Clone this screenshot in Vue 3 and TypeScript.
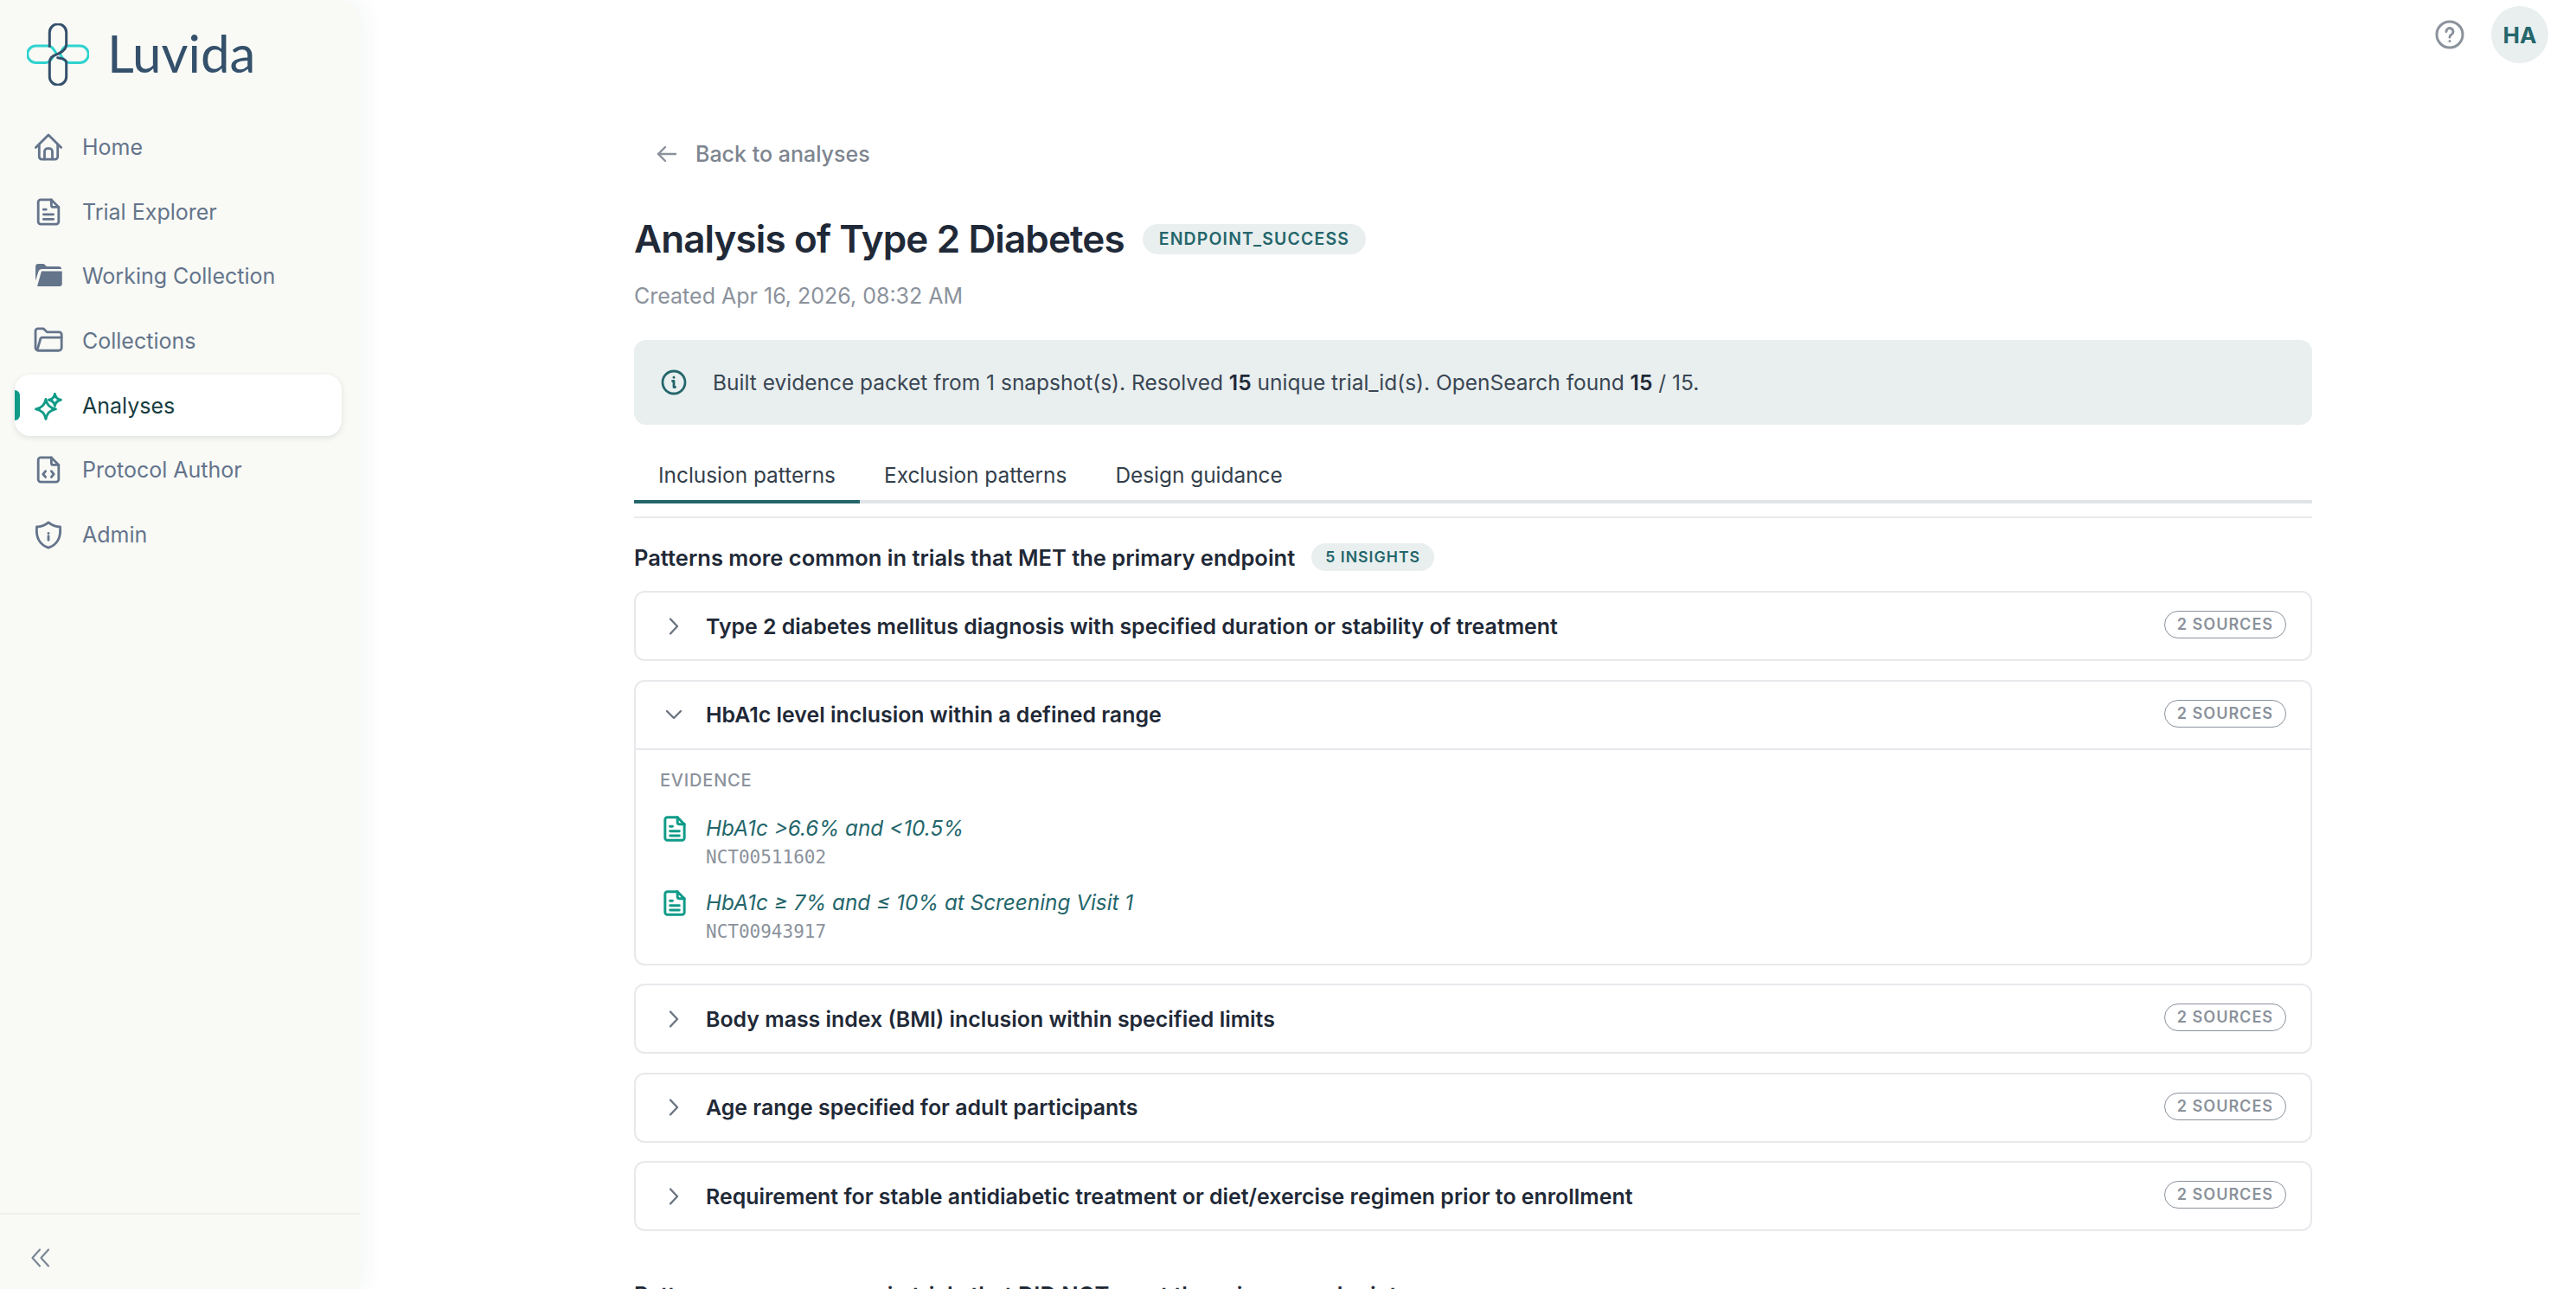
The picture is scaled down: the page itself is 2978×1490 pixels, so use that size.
<script setup lang="ts">
type NavItem = {
  label: string
  paths: string[]
  solid?: string[]
  active?: boolean
}

type Insight = {
  title: string
  open?: boolean
}

const filePaths = [
  'M19 3.5H8A2.5 2.5 0 0 0 5.500 6v20A2.500 2.500 0 0 0 8 28.500h16a2.500 2.500 0 0 0 2.500-2.500V11z',
  'M19 3.500V9a2 2 0 0 0 2 2h5.500',
]

const navItems: NavItem[] = [
  {
    label: 'Home',
    paths: [
      'M3 16.500 16 3.500l13 13',
      'M6.500 13.500V26A2.500 2.500 0 0 0 9 28.500h14a2.500 2.500 0 0 0 2.500-2.500V13.500',
      'M12 28.500v-8a3 3 0 0 1 3-3h2a3 3 0 0 1 3 3v8',
    ],
  },
  {
    label: 'Trial Explorer',
    paths: [...filePaths, 'M11 13.500h2.500', 'M11 18.500h10', 'M11 23.500h10'],
  },
  {
    label: 'Working Collection',
    paths: [],
    solid: [
      'M2.700 6.500a3 3 0 0 1 3-3h5.500l3 2.700h12.300a3 3 0 0 1 3 2.600H9.500a4 4 0 0 0-3.800 2.700L2.700 21z',
      'M4.500 26.700 8.500 12.300a2 2 0 0 1 2-1.300H30v13a2.700 2.700 0 0 1-2.700 2.700z',
    ],
  },
  {
    label: 'Collections',
    paths: [
      'M4.500 25.500 7.800 14a2 2 0 0 1 2-1.500H29.500',
      'M29.500 12.500V23a3 3 0 0 1-3 3H5.700a3 3 0 0 1-3-3V6a2.500 2.500 0 0 1 2.500-2.500h5.800l3.500 3.500h12.500a2.500 2.500 0 0 1 2.500 2.500z',
    ],
  },
  {
    label: 'Analyses',
    active: true,
    paths: [
      'M13.300 9.300Q15 18 23.500 19.500 15 21 13.300 29.700 11.600 21 3.100 19.500 11.600 18 13.300 9.300z',
      'M22.600 3.800Q23.500 9.100 28.800 10 23.500 10.900 22.600 16.200 21.700 10.900 16.400 10 21.700 9.100 22.600 3.800z',
    ],
  },
  {
    label: 'Protocol Author',
    paths: [...filePaths, 'M13 17.500l-2.500 3 2.500 3', 'M19 17.500l2.500 3-2.500 3'],
  },
  {
    label: 'Admin',
    paths: [
      'M16 3.500c3.500 3 7.500 4.500 12 4.500.8 8.500-.5 17.500-12 21.500C4.500 25.500 3.200 16.500 4 8c4.500 0 8.500-1.500 12-4.500z',
      'M16 17.500v4',
      'M16 14.500v.1',
    ],
  },
]

const insights: Insight[] = [
  { title: 'Type 2 diabetes mellitus diagnosis with specified duration or stability of treatment' },
  { title: 'HbA1c level inclusion within a defined range', open: true },
  { title: 'Body mass index (BMI) inclusion within specified limits' },
  { title: 'Age range specified for adult participants' },
  { title: 'Requirement for stable antidiabetic treatment or diet/exercise regimen prior to enrollment' },
]

const evidence = [
  { quote: 'HbA1c >6.6% and <10.5%', trial: 'NCT00511602' },
  { quote: 'HbA1c ≥ 7% and ≤ 10% at Screening Visit 1', trial: 'NCT00943917' },
]

const tabs = ['Inclusion patterns', 'Exclusion patterns', 'Design guidance']
</script>

<template>
  <div class="shell">
    <aside class="sidebar">
      <div class="brand">
        <svg class="logo" viewBox="0 0 72 72" fill="none" stroke-width="3" stroke-linecap="round">
          <path d="M34 34.700C31 30 29 26 25 26H10.500a9.750 9.750 0 0 0 0 19.500H22c4 0 6-3 8.700-7.500" stroke="#2fd3cf" />
          <path d="M38.500 35.500C41 30 43 26 47 26h14.500a9.750 9.750 0 0 1 0 19.500H49c-4 0-7-4-10-9" stroke="#2fd3cf" />
          <path d="M26.300 26.500V10.500a9.700 9.700 0 0 1 19.400 0V24c0 5-3 8-8.400 10.700-6 3-11 3.500-11 10.300v16.500a9.700 9.700 0 0 0 19.400 0V45c0-3-4-4.500-10-5.300" stroke="#34506b" />
        </svg>
        <span class="brand-name">Luvida</span>
      </div>

      <nav class="nav">
        <a v-for="item in navItems" :key="item.label" :class="['nav-item', { active: item.active }]">
          <svg class="nav-icon" viewBox="0 0 32 32" fill="none" stroke="currentColor" stroke-width="2.500" stroke-linecap="round" stroke-linejoin="round">
            <path v-for="d in item.solid" :key="d" :d="d" fill="currentColor" stroke="none" />
            <path v-for="d in item.paths" :key="d" :d="d" />
          </svg>
          {{ item.label }}
        </a>
      </nav>

      <div class="collapse">
        <svg width="26" height="26" viewBox="0 0 26 26" fill="none" stroke="#7b8794" stroke-width="2.200" stroke-linecap="round" stroke-linejoin="round">
          <path d="M12 3.500 3.500 13l8.500 9.500" />
          <path d="M22 3.500 13.500 13l8.500 9.500" />
        </svg>
      </div>
    </aside>

    <main class="main">
      <header class="topbar">
        <svg class="help" viewBox="0 0 34 34" fill="none" stroke="#8b929c" stroke-width="3" stroke-linecap="round" stroke-linejoin="round">
          <circle cx="17" cy="17" r="15" />
          <path d="M13 13.500a4 4 0 1 1 6 3.500c-1.500.8-2 1.500-2 3" />
          <path d="M17 24.500v.1" />
        </svg>
        <div class="avatar">HA</div>
      </header>

      <div class="content">
        <a class="back">
          <svg width="26" height="26" viewBox="0 0 26 26" fill="none" stroke="#8b929c" stroke-width="2.400" stroke-linecap="round" stroke-linejoin="round">
            <path d="M23 13H3" />
            <path d="M11 5l-8 8 8 8" />
          </svg>
          Back to analyses
        </a>

        <div class="title-row">
          <h1>Analysis of Type 2 Diabetes</h1>
          <span class="type-badge">ENDPOINT_SUCCESS</span>
        </div>
        <p class="created">Created Apr 16, 2026, 08:32 AM</p>

        <div class="alert">
          <svg class="alert-icon" viewBox="0 0 30 30" fill="none" stroke="#24666b" stroke-width="2.800" stroke-linecap="round" stroke-linejoin="round">
            <circle cx="15" cy="15" r="13" />
            <path d="M13.500 13.500H15v7h1.500" />
            <path d="M15 9.200v.1" />
          </svg>
          <span>Built evidence packet from 1 snapshot(s). Resolved <b>15</b> unique trial_id(s). OpenSearch found <b>15</b> / 15.</span>
        </div>

        <div class="tabs">
          <button v-for="(tab, index) in tabs" :key="tab" :class="['tab', { selected: index === 0 }]">{{ tab }}</button>
        </div>
        <div class="tabs-rule"></div>

        <div class="section-head">
          <h2>Patterns more common in trials that MET the primary endpoint</h2>
          <span class="count-badge">5 INSIGHTS</span>
        </div>

        <section v-for="insight in insights" :key="insight.title" class="card">
          <div :class="['card-head', { open: insight.open }]">
            <svg class="chevron" viewBox="0 0 24 24" fill="none" stroke="#6c7480" stroke-width="2.400" stroke-linecap="round" stroke-linejoin="round">
              <path :d="insight.open ? 'M4 8l8 8 8-8' : 'M8 3.500l8 8.500-8 8.500'" />
            </svg>
            <span class="card-title">{{ insight.title }}</span>
            <span class="sources">2 SOURCES</span>
          </div>
          <div v-if="insight.open" class="card-body">
            <div class="evidence-label">EVIDENCE</div>
            <div v-for="row in evidence" :key="row.trial" class="evidence-row">
              <svg class="doc" viewBox="0 0 32 32" fill="none" stroke="#0f9b88" stroke-width="2.800" stroke-linecap="round" stroke-linejoin="round">
                <path v-for="d in filePaths" :key="d" :d="d" />
                <path d="M11 13.500h2.500" />
                <path d="M11 18.500h10" />
                <path d="M11 23.500h10" />
              </svg>
              <div>
                <div class="quote">{{ row.quote }}</div>
                <div class="trial">{{ row.trial }}</div>
              </div>
            </div>
          </div>
        </section>

        <h2 class="next-head">Patterns more common in trials that DID NOT meet the primary endpoint</h2>
      </div>
    </main>
  </div>
</template>

<style>
html,
body {
  margin: 0;
  overflow: hidden;
  background: #fff;
}
</style>

<style scoped>
.shell {
  display: flex;
  height: 100vh;
  overflow: hidden;
  font-family: Inter, 'Liberation Sans', sans-serif;
}

.sidebar {
  position: relative;
  z-index: 2;
  display: flex;
  flex-direction: column;
  flex: 0 0 416px;
  box-sizing: border-box;
  background: #f9faf6;
  border-top-right-radius: 24px;
  box-shadow: 6px 0 24px rgba(30, 50, 60, 0.05);
}

.brand {
  display: flex;
  align-items: center;
  gap: 21px;
  height: 71px;
  padding: 27px 0 0 31px;
}

.logo {
  width: 72px;
  height: 72px;
}

.brand-name {
  margin-top: -3px;
  font-family: Lato, sans-serif;
  font-size: 60px;
  color: #34506b;
}

.nav {
  display: flex;
  flex-direction: column;
  gap: 3.700px;
  margin: 36.500px 0 0 17px;
  width: 378px;
}

.nav-item {
  position: relative;
  display: flex;
  align-items: center;
  gap: 21px;
  height: 71px;
  padding-left: 21px;
  border-radius: 18px;
  font-size: 25px;
  color: #64748b;
}

.nav-item.active {
  background: #fff;
  color: #173c40;
  box-shadow: 0 2px 6px rgba(20, 40, 50, 0.12);
}

.nav-item.active::before {
  content: '';
  position: absolute;
  left: 0;
  top: 18px;
  width: 6px;
  height: 35px;
  border-radius: 0 6px 6px 0;
  background: #0f9b88;
}

.nav-item.active .nav-icon {
  color: #0f9b88;
}

.nav-icon {
  width: 36px;
  height: 36px;
  flex: none;
}

.collapse {
  margin-top: auto;
  height: 86px;
  display: flex;
  align-items: center;
  padding: 0 0 0 34px;
  border-top: 2px solid #efefec;
}

.collapse svg {
  margin-top: 14px;
}

.main {
  position: relative;
  flex: 1;
  min-width: 0;
}

.topbar {
  position: absolute;
  top: 7px;
  right: 32px;
  display: flex;
  align-items: center;
  gap: 31px;
}

.help {
  width: 34px;
  height: 34px;
}

.avatar {
  width: 66px;
  height: 66px;
  border-radius: 50%;
  background: #e9efef;
  color: #24666b;
  font-size: 26px;
  font-weight: 700;
  display: flex;
  align-items: center;
  justify-content: center;
}

.content {
  box-sizing: border-box;
  width: 1940px;
  margin-left: 317px;
  padding-top: 160px;
}

.back {
  display: flex;
  align-items: center;
  gap: 20px;
  height: 36px;
  padding-left: 25px;
  font-size: 25px;
  font-weight: 500;
  color: #7d858f;
}

.title-row {
  display: flex;
  align-items: center;
  gap: 21px;
  margin-top: 48px;
  height: 64px;
}

h1 {
  margin: 0;
  font-size: 44px;
  font-weight: 600;
  letter-spacing: -0.880px;
  color: #1f2937;
}

.type-badge {
  padding: 0 19px;
  line-height: 35px;
  border-radius: 18px;
  background: #e9efef;
  color: #24666b;
  font-size: 19.400px;
  font-weight: 600;
  letter-spacing: 1.200px;
}

.created {
  margin: 18px 0 0;
  line-height: 32px;
  font-size: 25px;
  color: #8b929c;
}

.alert {
  display: flex;
  align-items: center;
  gap: 30px;
  height: 98px;
  margin-top: 35px;
  padding-left: 31px;
  border-radius: 14px;
  background: #e9efef;
  font-size: 24.500px;
  color: #3a4653;
}

.alert b {
  font-weight: 600;
  color: #1f2937;
}

.alert-icon {
  width: 30px;
  height: 30px;
}

.tabs {
  display: flex;
  margin-top: 37px;
  border-bottom: 4px solid #dfe4e6;
  height: 50px;
}

.tab {
  height: 54px;
  padding: 0 28px 9px;
  border: 0;
  border-bottom: 4px solid transparent;
  background: none;
  font: inherit;
  font-size: 24.400px;
  color: #343f4c;
}

.tab.selected {
  border-bottom-color: #24666b;
}

.tabs-rule {
  height: 2px;
  margin-top: 15px;
  background: #e8e9ec;
}

.section-head {
  display: flex;
  align-items: center;
  gap: 19px;
  height: 32px;
  margin: 29px 0 23px;
}

h2 {
  margin: 0;
  font-size: 25.500px;
  font-weight: 600;
  color: #1f2937;
}

.count-badge {
  padding: 0 16px;
  line-height: 32px;
  border-radius: 16px;
  background: #e9efef;
  color: #24666b;
  font-size: 17.700px;
  font-weight: 600;
  letter-spacing: 1px;
}

.card {
  box-sizing: border-box;
  margin-bottom: 21.500px;
  border: 2px solid #e8e9ec;
  border-radius: 12px;
}

.card-head {
  display: flex;
  align-items: center;
  height: 77px;
  padding: 0 28px 0 32px;
}

.card-head.open {
  border-bottom: 2px solid #e8e9ec;
}

.chevron {
  width: 24px;
  height: 24px;
  flex: none;
  margin-right: 25px;
}

.card-title {
  flex: 1;
  font-size: 24.900px;
  font-weight: 600;
  color: #1f2937;
}

.sources {
  margin-top: -3px;
  padding: 0 14px;
  line-height: 30px;
  border: 1px solid #8b929c;
  border-radius: 16px;
  color: #8b929c;
  font-size: 18px;
  font-weight: 600;
  letter-spacing: 1px;
}

.card-body {
  height: 247px;
  box-sizing: border-box;
  padding: 22px 28px 0;
}

.evidence-label {
  line-height: 26px;
  font-size: 20px;
  font-weight: 500;
  letter-spacing: 0.800px;
  color: #8b929c;
}

.evidence-row {
  display: flex;
  gap: 19px;
  margin-top: 26.500px;
}

.evidence-row + .evidence-row {
  margin-top: 21px;
}

.doc {
  width: 34px;
  height: 34px;
  flex: none;
}

.quote {
  line-height: 32px;
  font-size: 24.300px;
  font-style: italic;
  color: #24666b;
}

.trial {
  margin-top: 3px;
  line-height: 30px;
  font-family: 'DejaVu Sans Mono', monospace;
  font-size: 21px;
  color: #8b929c;
}

.next-head {
  margin-top: 58px;
}
</style>
